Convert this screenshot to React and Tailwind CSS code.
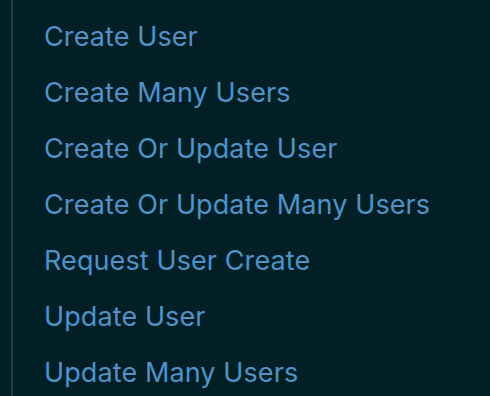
import React from "react";

const items = [
  "Create User",
  "Create Many Users",
  "Create Or Update User",
  "Create Or Update Many Users",
  "Request User Create",
  "Update User",
  "Update Many Users",
];

export default function App() {
  return (
    <div className="w-[490px] h-[396px] overflow-hidden bg-[#021f25] pl-[11px]">
      <div className="h-full border-l-2 border-[#17414f] pt-[9px] pl-[31px]">
        {items.map((item) => (
          <div
            key={item}
            className="h-[56px] flex items-center text-[27px] tracking-[0.1px] text-[#4f93c9] font-['Inter',sans-serif] whitespace-nowrap"
          >
            {item}
          </div>
        ))}
      </div>
    </div>
  );
}
